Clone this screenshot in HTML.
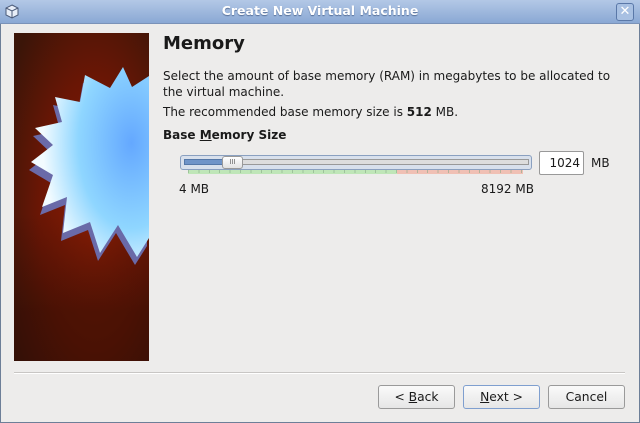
<!DOCTYPE html>
<html><head><style>
body{margin:0;width:640px;height:423px;overflow:hidden;background:#edeceb;font-family:"DejaVu Sans","Liberation Sans",sans-serif;font-size:12px;color:#1a1a1a;position:relative}
.a{position:absolute}
.btn{position:absolute;top:385px;height:22px;width:75px;border:1px solid #9a9a9a;border-radius:3px;background:linear-gradient(#fafafa,#e6e6e6);text-align:center;line-height:22px;font-size:12.3px}
</style></head><body>
<div class="a" style="left:0;top:0;width:638px;height:421px;border:1px solid #6d7f98"></div>
<div class="a" style="left:0;top:0;width:640px;height:23px;background:linear-gradient(#b3c8e6,#8aa8d4);border-bottom:1px solid #7a92b8"></div>
<div class="a" style="left:0;top:3px;width:640px;text-align:center;color:#fff;font-weight:bold;font-size:12.5px;text-shadow:0 1px 1px #566f98">Create New Virtual Machine</div>
<svg class="a" style="left:5px;top:4px" width="14" height="15" viewBox="0 0 14 15"><path d="M7 1L13 4V11L7 14L1 11V4Z" fill="#e8eef8" stroke="#4a5a78"/><path d="M1 4L7 7L13 4M7 7V14" stroke="#4a5a78" fill="none"/></svg>
<div class="a" style="left:616px;top:3px;width:16px;height:16px;border:1px solid #5a78a8;border-radius:3px;background:#a8c0e2;color:#fff;font-size:13px;line-height:15px;text-align:center">✕</div>
<svg class="a" style="left:14px;top:33px" width="135" height="328" viewBox="0 0 135 328">
<defs><radialGradient id="bg" cx="0.6" cy="0.55" r="0.75"><stop offset="0" stop-color="#8a1d05"/><stop offset="0.55" stop-color="#6a1605"/><stop offset="1" stop-color="#3b1508"/></radialGradient>
<linearGradient id="dk" x1="0" y1="0" x2="0" y2="1"><stop offset="0.55" stop-color="#2a0c04" stop-opacity="0"/><stop offset="0.85" stop-color="#2a0c04" stop-opacity="0.5"/></linearGradient>
<radialGradient id="st" cx="0.85" cy="0.4" r="0.75"><stop offset="0" stop-color="#64a8ff"/><stop offset="0.6" stop-color="#8fd6ff"/><stop offset="1" stop-color="#f2fbff"/></radialGradient></defs>
<rect width="135" height="328" fill="url(#bg)"/>
<rect width="135" height="328" fill="url(#dk)"/>
<g id="s"></g>
<polygon points="135,43 118,54 109,34 96,55 71,42 66,69 41,64 48,89 21,95 39,112 17,129 39,142 28,174 53,164 49,200 76,189 86,220 104,192 123,224 135,205" fill="#6a6aa8" transform="translate(-2,8)"/>
<polygon points="135,43 118,54 109,34 96,55 71,42 66,69 41,64 48,89 21,95 39,112 17,129 39,142 28,174 53,164 49,200 76,189 86,220 104,192 123,224 135,205" fill="url(#st)"/>
</svg>
<div class="a" style="left:163px;top:33px;font-size:18px;font-weight:bold">Memory</div>
<div class="a" style="left:163px;top:68px;line-height:16px;width:470px">Select the amount of base memory (RAM) in megabytes to be allocated to the virtual machine.</div>
<div class="a" style="left:163px;top:105px">The recommended base memory size is <b>512</b> MB.</div>
<div class="a" style="left:163px;top:128px;font-weight:bold">Base <u>M</u>emory Size</div>
<div class="a" style="left:180px;top:155px;width:350px;height:13px;border:1px solid #8aa0c0;border-radius:3px;background:#d8e0ec"></div>
<div class="a" style="left:184px;top:159px;width:343px;height:4px;border:1px solid #999;background:#ddd"></div>
<div class="a" style="left:184px;top:159px;width:40px;height:4px;border:1px solid #5578a8;background:#6f94c8"></div>
<div class="a" style="left:222px;top:156px;width:19px;height:11px;border:1px solid #999;border-radius:3px;background:linear-gradient(#fff,#e2e2e2);font-size:7px;line-height:11px;text-align:center;color:#666">III</div>
<div class="a" style="left:188px;top:170px;width:209px;height:4px;background:#bfe6b8"></div>
<div class="a" style="left:397px;top:170px;width:126px;height:4px;background:#f0c0b4"></div>
<div class="a" style="left:188px;top:170px;width:335px;height:3px;background:repeating-linear-gradient(90deg,#8a8 0 1px,transparent 1px 10.4px);opacity:.6"></div>
<div class="a" style="left:539px;top:151px;border:1px solid #999;border-radius:2px;background:#fff;text-align:right;line-height:22px;box-sizing:border-box;padding-right:3px;height:24px;width:45px">1024</div>
<div class="a" style="left:591px;top:156px">MB</div>
<div class="a" style="left:179px;top:182px">4 MB</div>
<div class="a" style="left:481px;top:182px">8192 MB</div>
<div class="a" style="left:14px;top:372px;width:611px;height:1px;background:#c8c6c4;border-bottom:1px solid #fff"></div>
<div class="btn" style="left:378px">&lt; <u>B</u>ack</div>
<div class="btn" style="left:463px;border-color:#7f9fcf"><u>N</u>ext &gt;</div>
<div class="btn" style="left:548px">Cancel</div>
</body></html>
